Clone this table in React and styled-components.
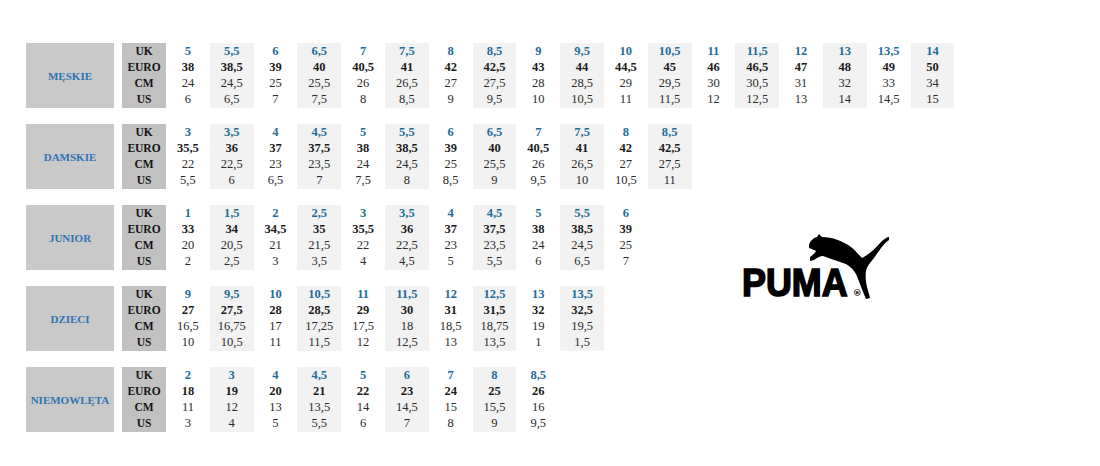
import styled, { createGlobalStyle } from "styled-components";

const GlobalStyle = createGlobalStyle`
  html, body {
    margin: 0;
    padding: 0;
    background: #ffffff;
  }
  body {
    font-family: "Liberation Serif", "Times New Roman", serif;
    width: 1100px;
    height: 466px;
    overflow: hidden;
  }
`;

const SIZES = [
  {
    name: "MĘSKIE",
    uk: ["5", "5,5", "6", "6,5", "7", "7,5", "8", "8,5", "9", "9,5", "10", "10,5", "11", "11,5", "12", "13", "13,5", "14"],
    euro: ["38", "38,5", "39", "40", "40,5", "41", "42", "42,5", "43", "44", "44,5", "45", "46", "46,5", "47", "48", "49", "50"],
    cm: ["24", "24,5", "25", "25,5", "26", "26,5", "27", "27,5", "28", "28,5", "29", "29,5", "30", "30,5", "31", "32", "33", "34"],
    us: ["6", "6,5", "7", "7,5", "8", "8,5", "9", "9,5", "10", "10,5", "11", "11,5", "12", "12,5", "13", "14", "14,5", "15"],
  },
  {
    name: "DAMSKIE",
    uk: ["3", "3,5", "4", "4,5", "5", "5,5", "6", "6,5", "7", "7,5", "8", "8,5"],
    euro: ["35,5", "36", "37", "37,5", "38", "38,5", "39", "40", "40,5", "41", "42", "42,5"],
    cm: ["22", "22,5", "23", "23,5", "24", "24,5", "25", "25,5", "26", "26,5", "27", "27,5"],
    us: ["5,5", "6", "6,5", "7", "7,5", "8", "8,5", "9", "9,5", "10", "10,5", "11"],
  },
  {
    name: "JUNIOR",
    uk: ["1", "1,5", "2", "2,5", "3", "3,5", "4", "4,5", "5", "5,5", "6"],
    euro: ["33", "34", "34,5", "35", "35,5", "36", "37", "37,5", "38", "38,5", "39"],
    cm: ["20", "20,5", "21", "21,5", "22", "22,5", "23", "23,5", "24", "24,5", "25"],
    us: ["2", "2,5", "3", "3,5", "4", "4,5", "5", "5,5", "6", "6,5", "7"],
  },
  {
    name: "DZIECI",
    uk: ["9", "9,5", "10", "10,5", "11", "11,5", "12", "12,5", "13", "13,5"],
    euro: ["27", "27,5", "28", "28,5", "29", "30", "31", "31,5", "32", "32,5"],
    cm: ["16,5", "16,75", "17", "17,25", "17,5", "18", "18,5", "18,75", "19", "19,5"],
    us: ["10", "10,5", "11", "11,5", "12", "12,5", "13", "13,5", "1", "1,5"],
  },
  {
    name: "NIEMOWLĘTA",
    uk: ["2", "3", "4", "4,5", "5", "6", "7", "8", "8,5"],
    euro: ["18", "19", "20", "21", "22", "23", "24", "25", "26"],
    cm: ["11", "12", "13", "13,5", "14", "14,5", "15", "15,5", "16"],
    us: ["3", "4", "5", "5,5", "6", "7", "8", "9", "9,5"],
  },
];

const Page = styled.div`
  display: grid;
  grid-template-columns: 692px 1fr;
  row-gap: 16px;
  padding: 43px 0 0 26px;
`;

const Block = styled.div`
  display: flex;
  height: 65px;
  grid-column: ${(p) => (p.wide ? "1 / -1" : "1")};
`;

const Category = styled.div`
  width: 88px;
  margin-right: 8px;
  background: #c9c9c9;
  display: flex;
  align-items: center;
  justify-content: center;
  color: #2f74b4;
  font-weight: bold;
  font-size: 11px;
`;

const Column = styled.div`
  width: ${(p) => (p.label ? "44px" : "43.8px")};
  display: flex;
  flex-direction: column;
  background: ${(p) => (p.label ? "#c1c1c1" : p.shaded ? "#f2f2f2" : "transparent")};
`;

const Cell = styled.div`
  height: 16px;
  line-height: 16px;
  text-align: center;
  font-size: ${(p) => (p.small ? "11.5px" : "12.5px")};
  white-space: nowrap;
  font-weight: ${(p) => (p.bold ? "bold" : "normal")};
  color: ${(p) => p.color || "#2b2b2b"};
`;

const LogoArea = styled.div`
  grid-column: 2;
  grid-row: 3 / 5;
  align-self: start;
  margin: 27px 0 0 24px;
  display: grid;
  width: 148px;
  height: 68px;
`;

const Wordmark = styled.div`
  grid-area: 1 / 1;
  align-self: end;
  justify-self: start;
  display: flex;
  align-items: flex-end;
  margin-bottom: 2px;
`;

const PumaText = styled.span`
  font-family: "Liberation Sans", Arial, sans-serif;
  font-weight: bold;
  font-size: 39px;
  line-height: 30px;
  color: #000;
  transform: scaleX(0.92);
  transform-origin: left bottom;
  -webkit-text-stroke: 1.6px #000;
`;

const Registered = styled.span`
  font-family: "DejaVu Sans", sans-serif;
  font-size: 9px;
  font-weight: bold;
  line-height: 9px;
  margin-left: -4px;
  color: #000;
`;

const Cat = styled.svg`
  grid-area: 1 / 1;
  justify-self: end;
  align-self: start;
`;

function SizeBlock({ data, wide }) {
  const rows = [
    { key: "uk", label: "UK", bold: true, color: "#1f6d97" },
    { key: "euro", label: "EURO", bold: true, color: "#1b1b1b" },
    { key: "cm", label: "CM", bold: false },
    { key: "us", label: "US", bold: false },
  ];
  return (
    <Block wide={wide}>
      <Category>{data.name}</Category>
      <Column label>
        {rows.map((r) => (
          <Cell key={r.key} small bold color="#151515">
            {r.label}
          </Cell>
        ))}
      </Column>
      {data.uk.map((_, i) => (
        <Column key={i} shaded={i % 2 === 1}>
          {rows.map((r) => (
            <Cell key={r.key} bold={r.bold} color={r.color}>
              {data[r.key][i]}
            </Cell>
          ))}
        </Column>
      ))}
    </Block>
  );
}

function PumaLogo() {
  return (
    <LogoArea>
      <Wordmark>
        <PumaText>PUMA</PumaText>
        <Registered>®</Registered>
      </Wordmark>
      <Cat width="85" height="68" viewBox="0 0 85 68">
        <path
          fill="#000"
          d="M 4 13 C 5 9, 8 6, 12 5 L 14 2 L 17 5
             C 27 5, 38 9, 46 15 C 51 19, 54 23, 57 26
             C 63 23, 70 17, 76 10 C 79 7, 82 5, 84 5 L 84 8
             C 79 11, 74 19, 69 26 C 65 31, 62 34, 61 39
             C 60 46, 61 53, 64 62 L 65 66 L 61 67
             C 57 58, 54 49, 51 42 C 48 37, 44 33, 38 31
             C 30 28, 23 26, 18 24 C 15 24, 12 26, 9 28
             L 5 29 L 5 25 C 8 23, 10 21, 11 19
             C 9 18, 7 17, 4 16 Z"
        />
      </Cat>
    </LogoArea>
  );
}

export default function App() {
  return (
    <>
      <GlobalStyle />
      <Page>
        {SIZES.map((s, i) => (
          <SizeBlock key={s.name} data={s} wide={i === 0} />
        ))}
        <PumaLogo />
      </Page>
    </>
  );
}
